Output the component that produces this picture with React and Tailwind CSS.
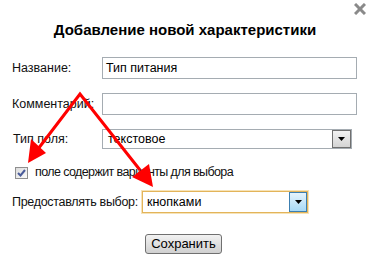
const Arrows = () => (
  <svg className="pointer-events-none absolute left-0 top-0" width="370" height="276">
    <g stroke="#ff0000" strokeWidth="3" fill="none" strokeLinejoin="miter">
      <polyline points="38,149 80,94 140,170" />
    </g>
    <polygon points="28,163 46,153 31,139" fill="#ff0000" />
    <polygon points="153,187 149,164 132,177" fill="#ff0000" />
  </svg>
);

const DropButton = ({ active }) => (
  <span
    className={
      active
        ? "flex h-full w-[18px] items-center justify-center border border-[#3c7fb1] bg-gradient-to-b from-[#e5f4fc] to-[#a7d9f5]"
        : "flex h-full w-[19px] items-center justify-center border border-[#707070] bg-gradient-to-b from-[#f2f2f2] to-[#d4d4d4]"
    }
  >
    <svg width="7" height="4" viewBox="0 0 7 4">
      <polygon points="0,0 7,0 3.5,4" fill="#000" />
    </svg>
  </span>
);

export default function App() {
  return (
    <div
      className="relative h-[276px] w-[370px] overflow-hidden whitespace-nowrap bg-white text-[12.5px] text-[#111]"
      style={{ fontFamily: "'Liberation Sans', Arial, sans-serif" }}
    >
      <svg className="absolute right-[4px] top-[3px]" width="12" height="12" viewBox="0 0 12 12">
        <g stroke="#8a8a8a" strokeWidth="3">
          <line x1="1" y1="1" x2="11" y2="11" />
          <line x1="11" y1="1" x2="1" y2="11" />
        </g>
      </svg>

      <h1 className="mt-[22px] text-center text-[15px] font-bold leading-[16px] text-black">
        Добавление новой характеристики
      </h1>

      <div className="mt-[19px] flex h-[22px] items-center">
        <span className="w-[102px] shrink-0 pl-[12px]">Название:</span>
        <div className="flex h-full w-[255px] items-center border border-[#a5acb2] pl-[3px] text-black">
          Тип питания
        </div>
      </div>

      <div className="mt-[14px] flex h-[22px] items-center">
        <span className="w-[102px] shrink-0 pl-[12px]">Комментарий:</span>
        <div className="h-full w-[255px] border border-[#a5acb2]" />
      </div>

      <div className="mt-[14px] flex h-[20px] items-center">
        <span className="w-[102px] shrink-0 pl-[13px]">Тип поля:</span>
        <div className="flex h-full w-[250px] items-center justify-between border border-[#a5acb2] pl-[5px] text-black">
          <span>текстовое</span>
          <DropButton />
        </div>
      </div>

      <div className="mt-[17px] flex h-[13px] items-center pl-[15px]">
        <span className="flex h-[12px] w-[13px] shrink-0 items-center justify-center border border-[#8f8f8f] bg-gradient-to-br from-[#dcdcdc] to-[#fbfbfb]">
          <svg width="9" height="8" viewBox="0 0 9 8">
            <polyline points="1,4 3.5,6.5 8,1" stroke="#4a5c9a" strokeWidth="2" fill="none" />
          </svg>
        </span>
        <span className="ml-[7px] tracking-[-0.6px]">поле содержит варианты для выбора</span>
      </div>

      <div className="mt-[12px] flex h-[22px] items-center">
        <span className="w-[142px] shrink-0 pl-[12px] tracking-[-0.3px]">Предоставлять выбор:</span>
        <div className="flex h-full w-[166px] items-center justify-between border border-[#e3b45a] pl-[4px] text-black shadow-[0_0_0_1px_#f6e3b8]">
          <span>кнопками</span>
          <DropButton active />
        </div>
      </div>

      <div className="mt-[21px] pl-[145px]">
        <button className="h-[20px] w-[77px] rounded-[3px] border border-[#707070] bg-gradient-to-b from-[#f2f2f2] to-[#d0d0d0] text-[13px] leading-[16px] text-black">
          Сохранить
        </button>
      </div>

      <Arrows />
    </div>
  );
}
